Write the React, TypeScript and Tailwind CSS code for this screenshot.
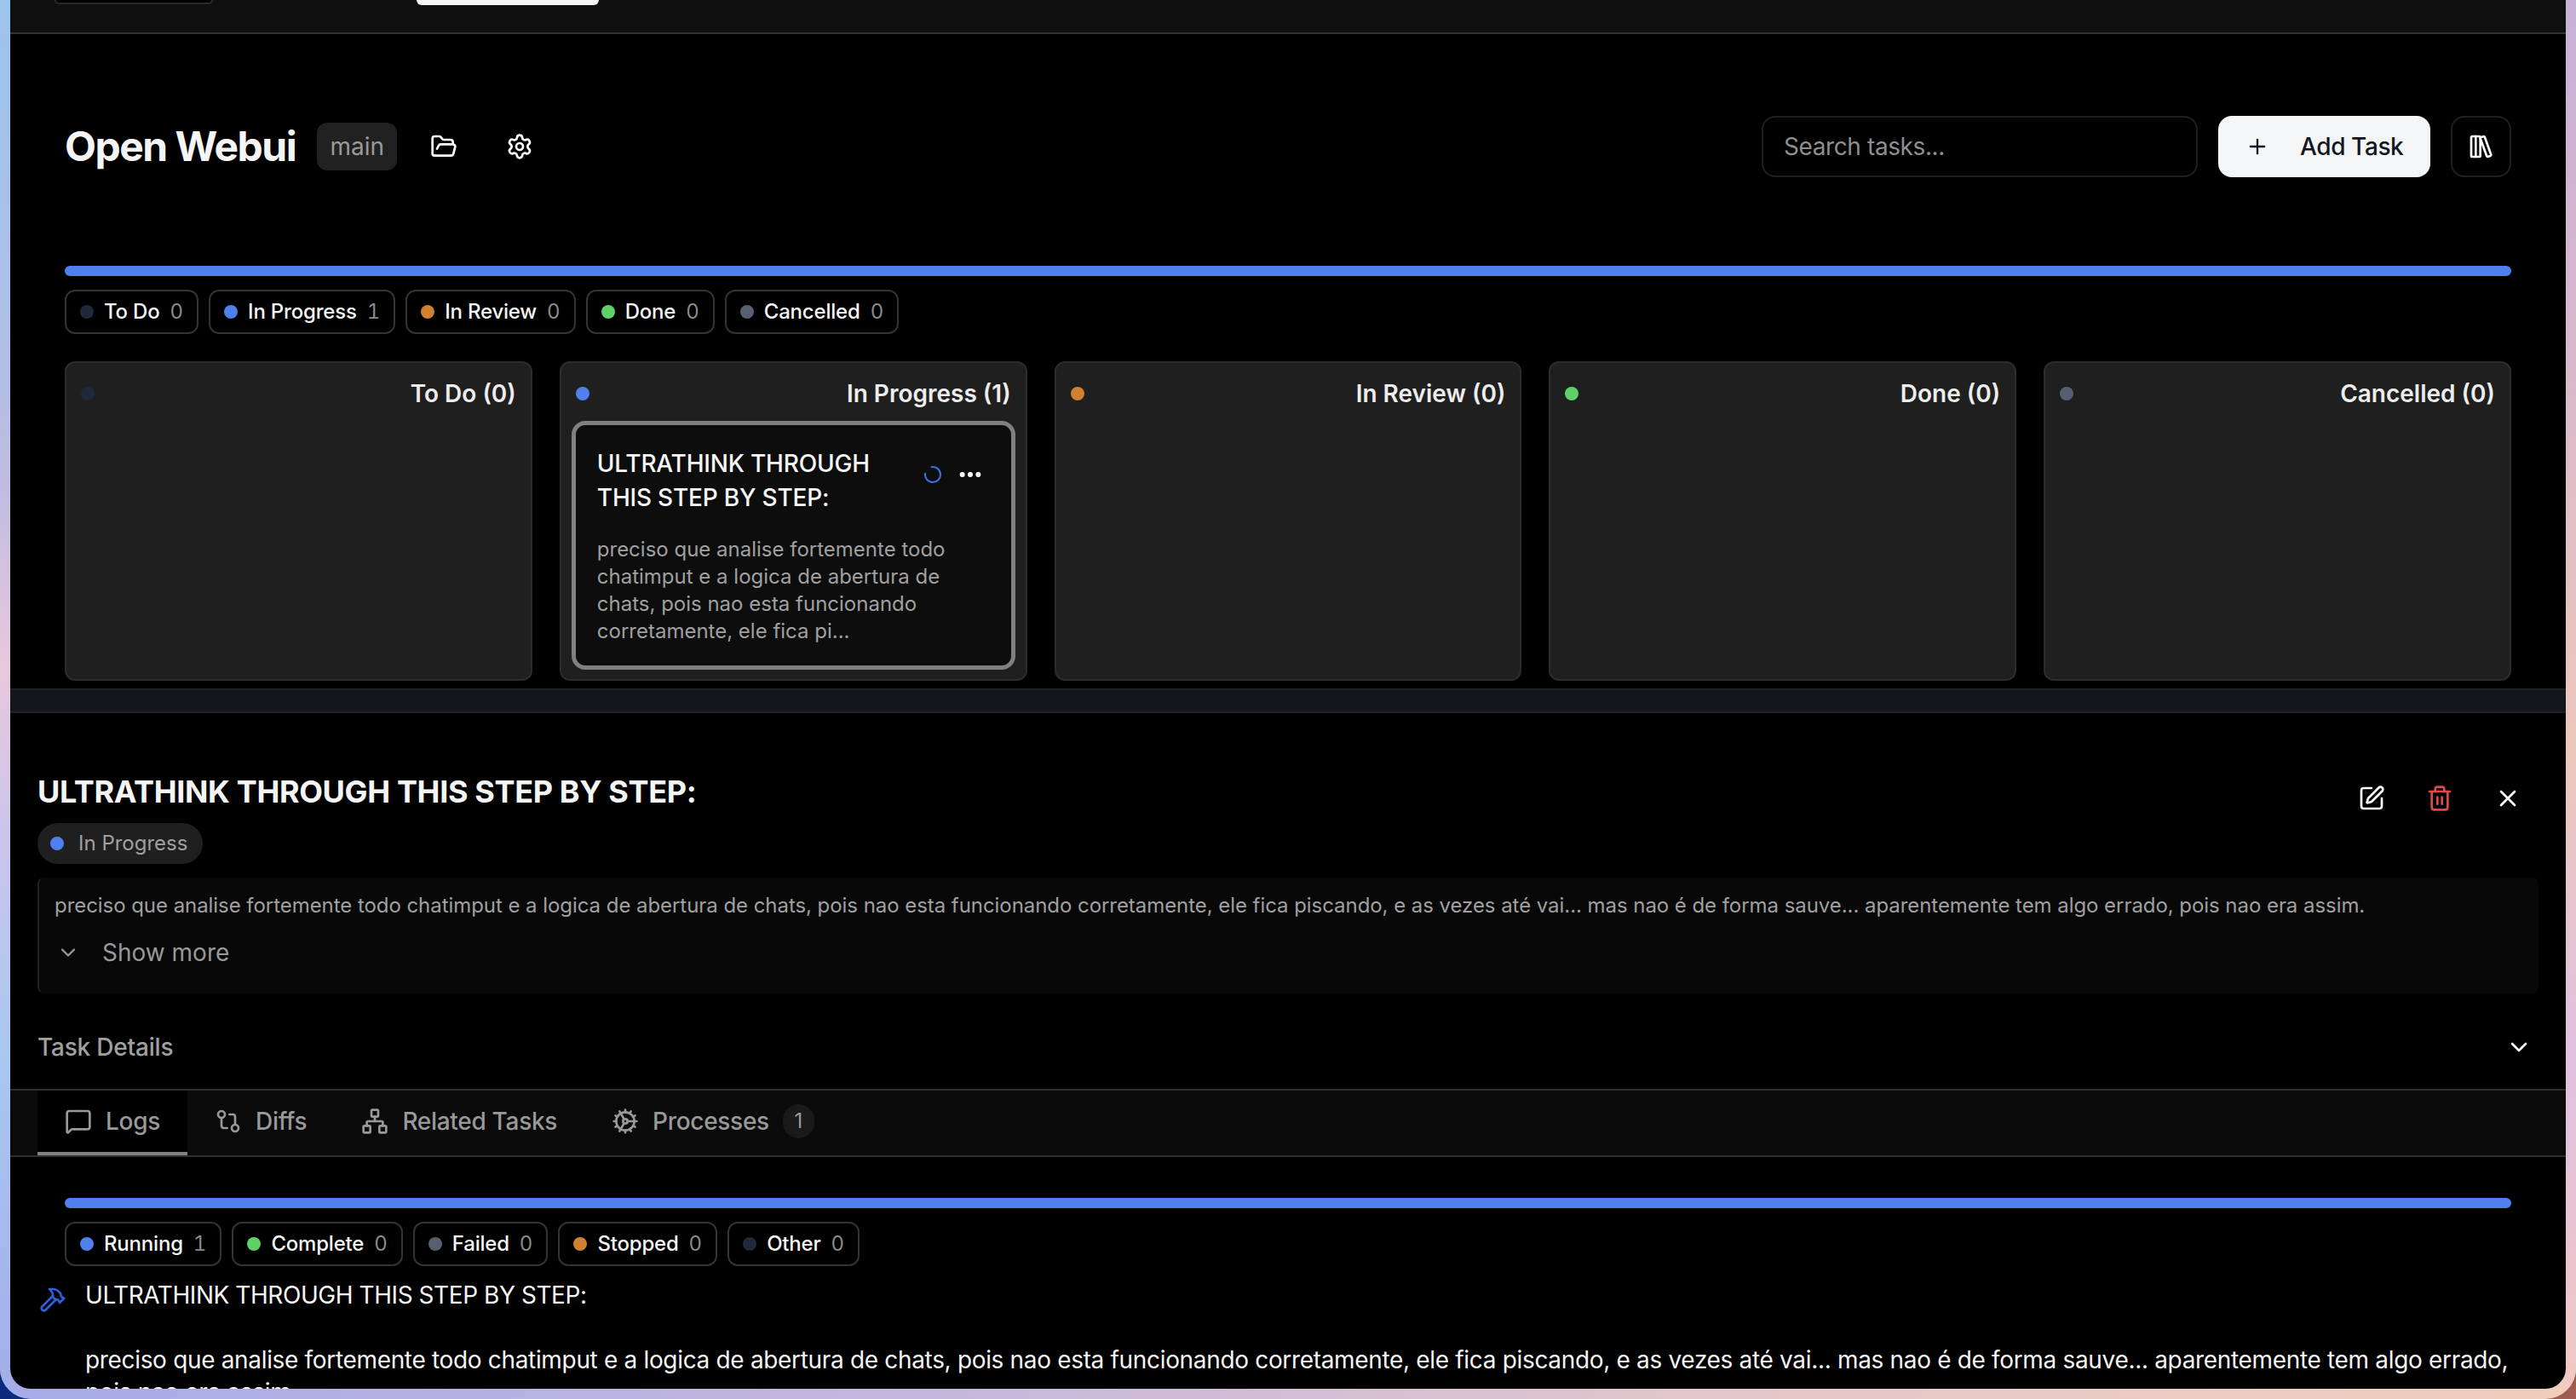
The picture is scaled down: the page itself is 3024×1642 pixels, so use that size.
import { ChevronDown, Cog, Ellipsis, FolderOpen, GitCompare, Hammer, LibraryBig, LoaderCircle, MessageSquare, Network, Plus, Settings, SquarePen, Trash2, X } from 'lucide-react'

const DESC = 'preciso que analise fortemente todo chatimput e a logica de abertura de chats, pois nao esta funcionando corretamente, ele fica piscando, e as vezes até vai... mas nao é de forma sauve... aparentemente tem algo errado, pois nao era assim.'

const TODO = 'bg-[#1e293b]'
const BLUE = 'bg-[#4f80ee]'
const ORANGE = 'bg-[#d08030]'
const GREEN = 'bg-[#5fd068]'
const GRAY = 'bg-[#566070]'

const taskChips = [
  { label: 'To Do', count: 0, dot: TODO },
  { label: 'In Progress', count: 1, dot: BLUE },
  { label: 'In Review', count: 0, dot: ORANGE },
  { label: 'Done', count: 0, dot: GREEN },
  { label: 'Cancelled', count: 0, dot: GRAY },
]

const logChips = [
  { label: 'Running', count: 1, dot: BLUE },
  { label: 'Complete', count: 0, dot: GREEN },
  { label: 'Failed', count: 0, dot: GRAY },
  { label: 'Stopped', count: 0, dot: ORANGE },
  { label: 'Other', count: 0, dot: TODO },
]

function Dot({ color }: { color: string }) {
  return <span className={`w-4 h-4 rounded-full shrink-0 ${color}`} />
}

function StatusBar({ chips }: { chips: typeof taskChips }) {
  return (
    <div className="flex flex-col gap-4 px-[64px]">
      <div className="h-3 rounded-full bg-[#4f80ee]" />
      <div className="flex gap-3">
        {chips.map(c => (
          <div key={c.label} className="flex items-center h-[52px] pl-4 pr-4 gap-3 rounded-xl border-2 border-[#333333] text-[24px]">
            <Dot color={c.dot} />
            <span className="font-medium tracking-[-0.2px] text-[#f5f5f5]">{c.label}</span>
            <span className="tabular-nums text-[#8a8a8a]">{c.count}</span>
          </div>
        ))}
      </div>
    </div>
  )
}

function Column({ label, count, dot, children }: { label: string; count: number; dot: string; children?: React.ReactNode }) {
  return (
    <div className="flex-1 min-w-0 h-[375px] rounded-xl border-2 border-[#2c2c2c] bg-[#1f1f1f] flex flex-col px-3">
      <div className="flex items-center justify-between h-[68px] pt-1 px-[5px]">
        <Dot color={dot} />
        <span className="text-[28px] font-semibold text-[#ededed]">{label} ({count})</span>
      </div>
      {children}
    </div>
  )
}

function Tab({ icon, label, active, children }: { icon: React.ReactNode; label: string; active?: boolean; children?: React.ReactNode }) {
  return (
    <div className={`flex items-center gap-4 h-full px-8 text-[28px] font-medium tracking-[-0.3px] text-[#999999] border-b-4 ${active ? 'bg-black border-[#808080]' : 'border-transparent'}`}>
      {icon}
      <span>{label}</span>
      {children}
    </div>
  )
}

export default function App() {
  return (
    <div className="w-[3024px] h-[1642px] overflow-hidden bg-[linear-gradient(90deg,#0b2a7c_50%,#a05a50_50%)] font-['Inter',sans-serif]">
      <div className="flex flex-col h-full overflow-hidden rounded-b-[36px] bg-[linear-gradient(90deg,#a6ace8_0%,#c4b6de_35%,#e6c8c8_70%,#f0cdbc_100%)]">
        <div className="flex flex-1 min-h-0">
          {/* left edge of the wallpaper */}
          <div className="w-3 shrink-0 bg-[linear-gradient(180deg,#9cc4ec_0%,#acc0e8_22%,#c0bce0_35%,#e8c8dc_48%,#c8c4ec_62%,#a8c8f0_76%,#a4aeea_100%)]" />

          <div className="flex-1 min-w-0 flex flex-col overflow-hidden bg-black rounded-b-[24px] text-white">
            {/* top bar, scrolled nearly out of view */}
            <div className="h-10 shrink-0 bg-[#0f0f0f] border-b-2 border-[#333333] overflow-hidden">
              <div className="flex items-start gap-[239px] pl-[52px]">
                <div className="w-[186px] h-[5px] rounded-b-lg bg-black border-2 border-t-0 border-[#2a2a2a]" />
                <div className="w-[214px] h-[6px] rounded-b-lg bg-[#f4f5f7]" />
              </div>
            </div>

            {/* project header */}
            <div className="flex items-center justify-between h-[272px] shrink-0 px-[64px] pb-2">
              <div className="flex items-center">
                <h1 className="text-[48px] font-bold tracking-[-1.5px] text-[#f5f5f5]">Open Webui</h1>
                <span className="ml-[25px] h-[56px] w-[94px] flex items-center justify-center rounded-xl bg-[#212121] text-[28px] text-[#9a9a9a]">main</span>
                <FolderOpen className="ml-[39px] w-8 h-8 text-white" strokeWidth={2} />
                <Settings className="ml-[57px] w-8 h-8 text-white" strokeWidth={2} />
              </div>
              <div className="flex items-center">
                <div className="w-[512px] h-[72px] flex items-center pl-6 rounded-2xl border-2 border-[#1f1f1f] text-[28px] tracking-[-0.4px] text-[#8f8f8f]">Search tasks...</div>
                <button className="ml-6 w-[249px] h-[72px] flex items-center pl-8 gap-[36px] rounded-2xl bg-[#f4f5f7] text-[#14161f] text-[28px] font-medium tracking-[-0.4px]">
                  <Plus className="w-7 h-7" strokeWidth={2} />
                  Add Task
                </button>
                <button className="ml-6 w-[71px] h-[72px] flex items-center justify-center rounded-2xl border-2 border-[#1f1f1f]">
                  <LibraryBig className="w-8 h-8 text-white" strokeWidth={2} />
                </button>
              </div>
            </div>

            <StatusBar chips={taskChips} />

            {/* kanban columns */}
            <div className="flex gap-8 px-[64px] mt-8 shrink-0">
              <Column label="To Do" count={0} dot={TODO} />
              <Column label="In Progress" count={1} dot={BLUE}>
                <div className="h-[292px] rounded-2xl border-[5px] border-[#808080] bg-[#0d0d0d] flex flex-col pl-[25px] pr-[18px] pt-[25px]">
                  <div className="flex items-center">
                    <div className="w-[390px] shrink-0 text-[28px] leading-[40px] font-medium tracking-[-0.2px] text-[#f5f5f5]">ULTRATHINK THROUGH THIS STEP BY STEP:</div>
                    <LoaderCircle className="ml-[-8px] mt-[-14px] w-6 h-6 text-[#3f6fe0] rotate-[-100deg]" strokeWidth={2} />
                    <Ellipsis className="ml-[16px] mt-[-14px] w-8 h-8 text-white" strokeWidth={2.5} />
                  </div>
                  <p className="mt-[25px] w-[440px] text-[24px] leading-[32px] text-[#a0a0a0]">preciso que analise fortemente todo chatimput e a logica de abertura de chats, pois nao esta funcionando corretamente, ele fica pi...</p>
                </div>
              </Column>
              <Column label="In Review" count={0} dot={ORANGE} />
              <Column label="Done" count={0} dot={GREEN} />
              <Column label="Cancelled" count={0} dot={GRAY} />
            </div>

            {/* resize handle */}
            <div className="h-[29px] mt-[9px] shrink-0 bg-[#13161a] border-y-2 border-[#1e2228]" />

            {/* task detail */}
            <div className="flex items-start justify-between px-[32px] pt-[70px] shrink-0">
              <h2 className="text-[36px] leading-[44px] font-bold tracking-[-0.36px] text-[#f5f5f5]">ULTRATHINK THROUGH THIS STEP BY STEP:</h2>
              <div className="flex items-center gap-[48px] mt-[14px] -mb-2 mr-[20px]">
                <SquarePen className="w-8 h-8 text-white" strokeWidth={2} />
                <Trash2 className="w-8 h-8 text-[#e04848]" strokeWidth={2} />
                <X className="w-8 h-8 text-white" strokeWidth={2} />
              </div>
            </div>
            <div className="flex pl-[32px] mt-[15px] shrink-0">
              <span className="flex items-center gap-[17px] h-12 pl-[15px] pr-[18px] rounded-full bg-[#1f1f1f] text-[24px] text-[#a0a0a0]">
                <Dot color={BLUE} />
                In Progress
              </span>
            </div>
            <div className="mx-[32px] mt-4 h-[136px] shrink-0 rounded-lg border-l-2 border-[#222222] bg-[#080808] pl-[18px] pt-[16px]">
              <p className="text-[24px] leading-[34px] tracking-[-0.055px] text-[#a0a0a0] whitespace-nowrap">{DESC}</p>
              <div className="flex items-center mt-[17px] text-[28px] text-[#999999]">
                <ChevronDown className="ml-[2px] w-7 h-7" strokeWidth={2} />
                <span className="ml-[26px]">Show more</span>
              </div>
            </div>
            <div className="flex items-center justify-between h-[112px] pt-[14px] shrink-0 pl-[32px] pr-[39px]">
              <span className="text-[28px] font-medium tracking-[-0.2px] text-[#a0a0a0]">Task Details</span>
              <ChevronDown className="w-8 h-8 text-white" strokeWidth={2} />
            </div>

            {/* tabs */}
            <div className="flex h-[80px] shrink-0 pl-[32px] bg-[#0a0a0a] border-y-2 border-[#2e2e2e]">
              <Tab active label="Logs" icon={<MessageSquare className="w-8 h-8" strokeWidth={2} />} />
              <Tab label="Diffs" icon={<GitCompare className="w-8 h-8" strokeWidth={2} />} />
              <Tab label="Related Tasks" icon={<Network className="w-8 h-8" strokeWidth={2} />} />
              <Tab label="Processes" icon={<Cog className="w-8 h-8" strokeWidth={2} />}>
                <span className="w-[37px] h-10 flex items-center justify-center rounded-full bg-[#1a1a1a] text-[24px] font-normal">1</span>
              </Tab>
            </div>

            <div className="mt-[48px] shrink-0">
              <StatusBar chips={logChips} />
            </div>

            {/* log output */}
            <div className="flex mt-[15px] pl-[34px] pr-[64px]">
              <Hammer className="mt-[8px] w-8 h-8 shrink-0 text-[#2f5fdb]" strokeWidth={2} />
              <div className="ml-[22px] text-[28px] leading-[38px] tracking-[-0.33px] text-[#f5f5f5]">
                <div className="tracking-[-0.44px]">ULTRATHINK THROUGH THIS STEP BY STEP:</div>
                <div className="mt-[38px]">{DESC}</div>
              </div>
            </div>
          </div>

          {/* right edge of the wallpaper */}
          <div className="w-3 shrink-0 bg-[linear-gradient(180deg,#c8b0d8_0%,#d8b8cc_25%,#ecc8bc_54%,#e0c0e0_76%,#f0c8c4_100%)]" />
        </div>
        <div className="h-3 shrink-0" />
      </div>
    </div>
  )
}
